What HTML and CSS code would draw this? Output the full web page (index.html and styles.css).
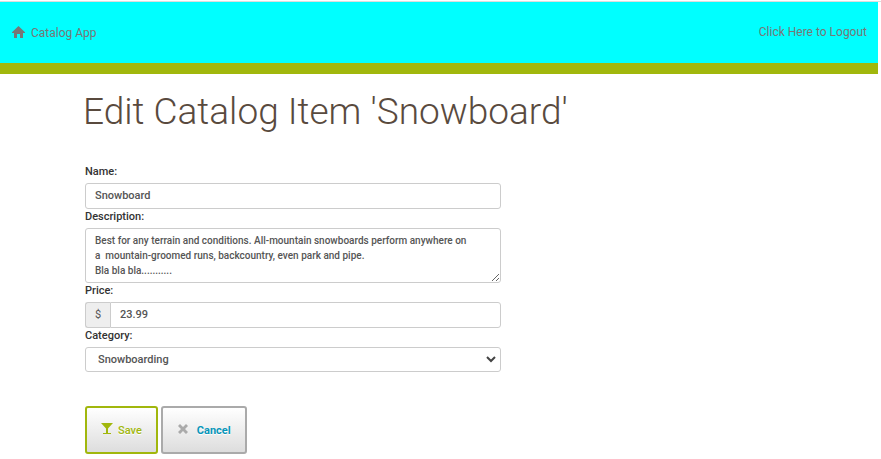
FILE: index.html
```html
<!DOCTYPE html>
<html lang="en">
<head>
<meta charset="utf-8">
<title>Catalog App</title>
<link rel="stylesheet" href="styles.css">
</head>
<body>
<header class="navbar">
  <a class="brand" href="#">
    <svg class="home" viewBox="0 0 13 12" aria-hidden="true"><path d="M6.500 0 13 6.300V7H11V12H8V8H5V12H2V7H0V6.300z"/></svg>
    <span>Catalog App</span>
  </a>
  <a class="logout" href="#">Click Here to Logout</a>
</header>
<main class="content">
  <h1>Edit Catalog Item 'Snowboard'</h1>
  <form>
    <label for="name">Name:</label>
    <input class="control" id="name" type="text" value="Snowboard">
    <label for="description">Description:</label>
    <textarea class="control" id="description" rows="3" spellcheck="false">Best for any terrain and conditions. All-mountain snowboards perform anywhere on a  mountain-groomed runs, backcountry, even park and pipe.
Bla bla bla...........</textarea>
    <label for="price">Price:</label>
    <div class="group">
      <span class="addon">$</span>
      <input class="control" id="price" type="text" value="23.99">
    </div>
    <label for="category">Category:</label>
    <div class="select">
      <select class="control" id="category"><option>Snowboarding</option></select>
      <svg class="chevron" viewBox="0 0 10 7" aria-hidden="true"><path d="M1 1 5 5 9 1"/></svg>
    </div>
    <div class="actions">
      <button class="btn save" type="submit">
        <svg viewBox="0 0 12 12" aria-hidden="true"><path d="M0 0H12L7 5.500V10H10V11H2V10H5V5.500z"/></svg>
        <span>Save</span>
      </button>
      <button class="btn cancel" type="button">
        <svg viewBox="0 0 12 12" aria-hidden="true"><path d="M3 1 6 4 9 1 11 3 8 6 11 9 9 11 6 8 3 11 1 9 4 6 1 3z"/></svg>
        <span>Cancel</span>
      </button>
    </div>
  </form>
</main>
</body>
</html>
```
FILE: styles.css
```css
* {
  box-sizing: border-box;
}

body {
  margin: 0;
  padding-top: 1px;
  background: #fff;
  color: #333;
  font: 500 11px/15px Roboto, sans-serif;
}

body::before {
  content: "";
  display: block;
  height: 1px;
  background: #ddd;
}

.navbar {
  display: flex;
  justify-content: space-between;
  align-items: center;
  height: 72px;
  margin-right: 3px;
  padding: 0 11px 0 12px;
  border-bottom: 11px solid #a1b70d;
  background: #0ff;
  font-size: 12px;
  font-weight: 400;
}

.navbar a {
  color: #777;
  text-decoration: none;
}

.brand {
  display: flex;
  align-items: center;
  gap: 6px;
  padding-top: 1px;
}

.home {
  width: 13px;
  height: 12px;
  margin-bottom: 3px;
  fill: #777;
}

.content {
  padding: 16px 83px 0;
}

h1 {
  margin: 0 0 30px;
  color: #594a3e;
  font-size: 37px;
  font-weight: 300;
  line-height: 44px;
}

form {
  display: flex;
  flex-direction: column;
  max-width: 418px;
  padding-left: 2px;
}

label {
  padding-bottom: 4px;
}

.control {
  display: block;
  width: 100%;
  height: 26px;
  margin: 0;
  padding: 4px 9px;
  border: 1px solid #ccc;
  border-radius: 3px;
  background: #fff;
  color: #555;
  font: inherit;
  outline: none;
}

input.control {
  padding: 3px 9px 5px;
}

textarea.control {
  height: 55px;
  padding-right: 28px;
  overflow: hidden;
  font-size: 10px;
  resize: vertical;
}

.group {
  display: flex;
}

.addon {
  flex: 0 0 25px;
  border: 1px solid #ccc;
  border-right: 0;
  border-radius: 3px 0 0 3px;
  background: #eee;
  color: #555;
  font-weight: 400;
  line-height: 24px;
  text-align: center;
}

.group .control {
  border-radius: 0 3px 3px 0;
}

.select {
  position: relative;
}

.select .control {
  height: 25px;
  padding: 0 12px;
  appearance: none;
}

.chevron {
  position: absolute;
  top: 9px;
  right: 5px;
  width: 10px;
  height: 7px;
  fill: none;
  stroke: #444;
  stroke-width: 2;
  pointer-events: none;
}

.actions {
  display: flex;
  gap: 3px;
  margin-top: 34px;
}

.btn {
  display: flex;
  align-items: center;
  height: 48px;
  padding: 0 14px;
  border: 2px solid;
  border-radius: 3px;
  background: linear-gradient(#fff, #ddd);
  font: inherit;
  text-shadow: 0 1px 0 #fff;
}

.btn svg {
  width: 12px;
  height: 12px;
  margin-bottom: 3px;
  fill: currentColor;
}

.save {
  gap: 5px;
  border-color: #a1b70d;
  color: #a1b70d;
}

.cancel {
  gap: 8px;
  border-color: #aaa;
  color: #aaa;
}

.cancel span {
  color: #0896ba;
  font-weight: 700;
}
```
